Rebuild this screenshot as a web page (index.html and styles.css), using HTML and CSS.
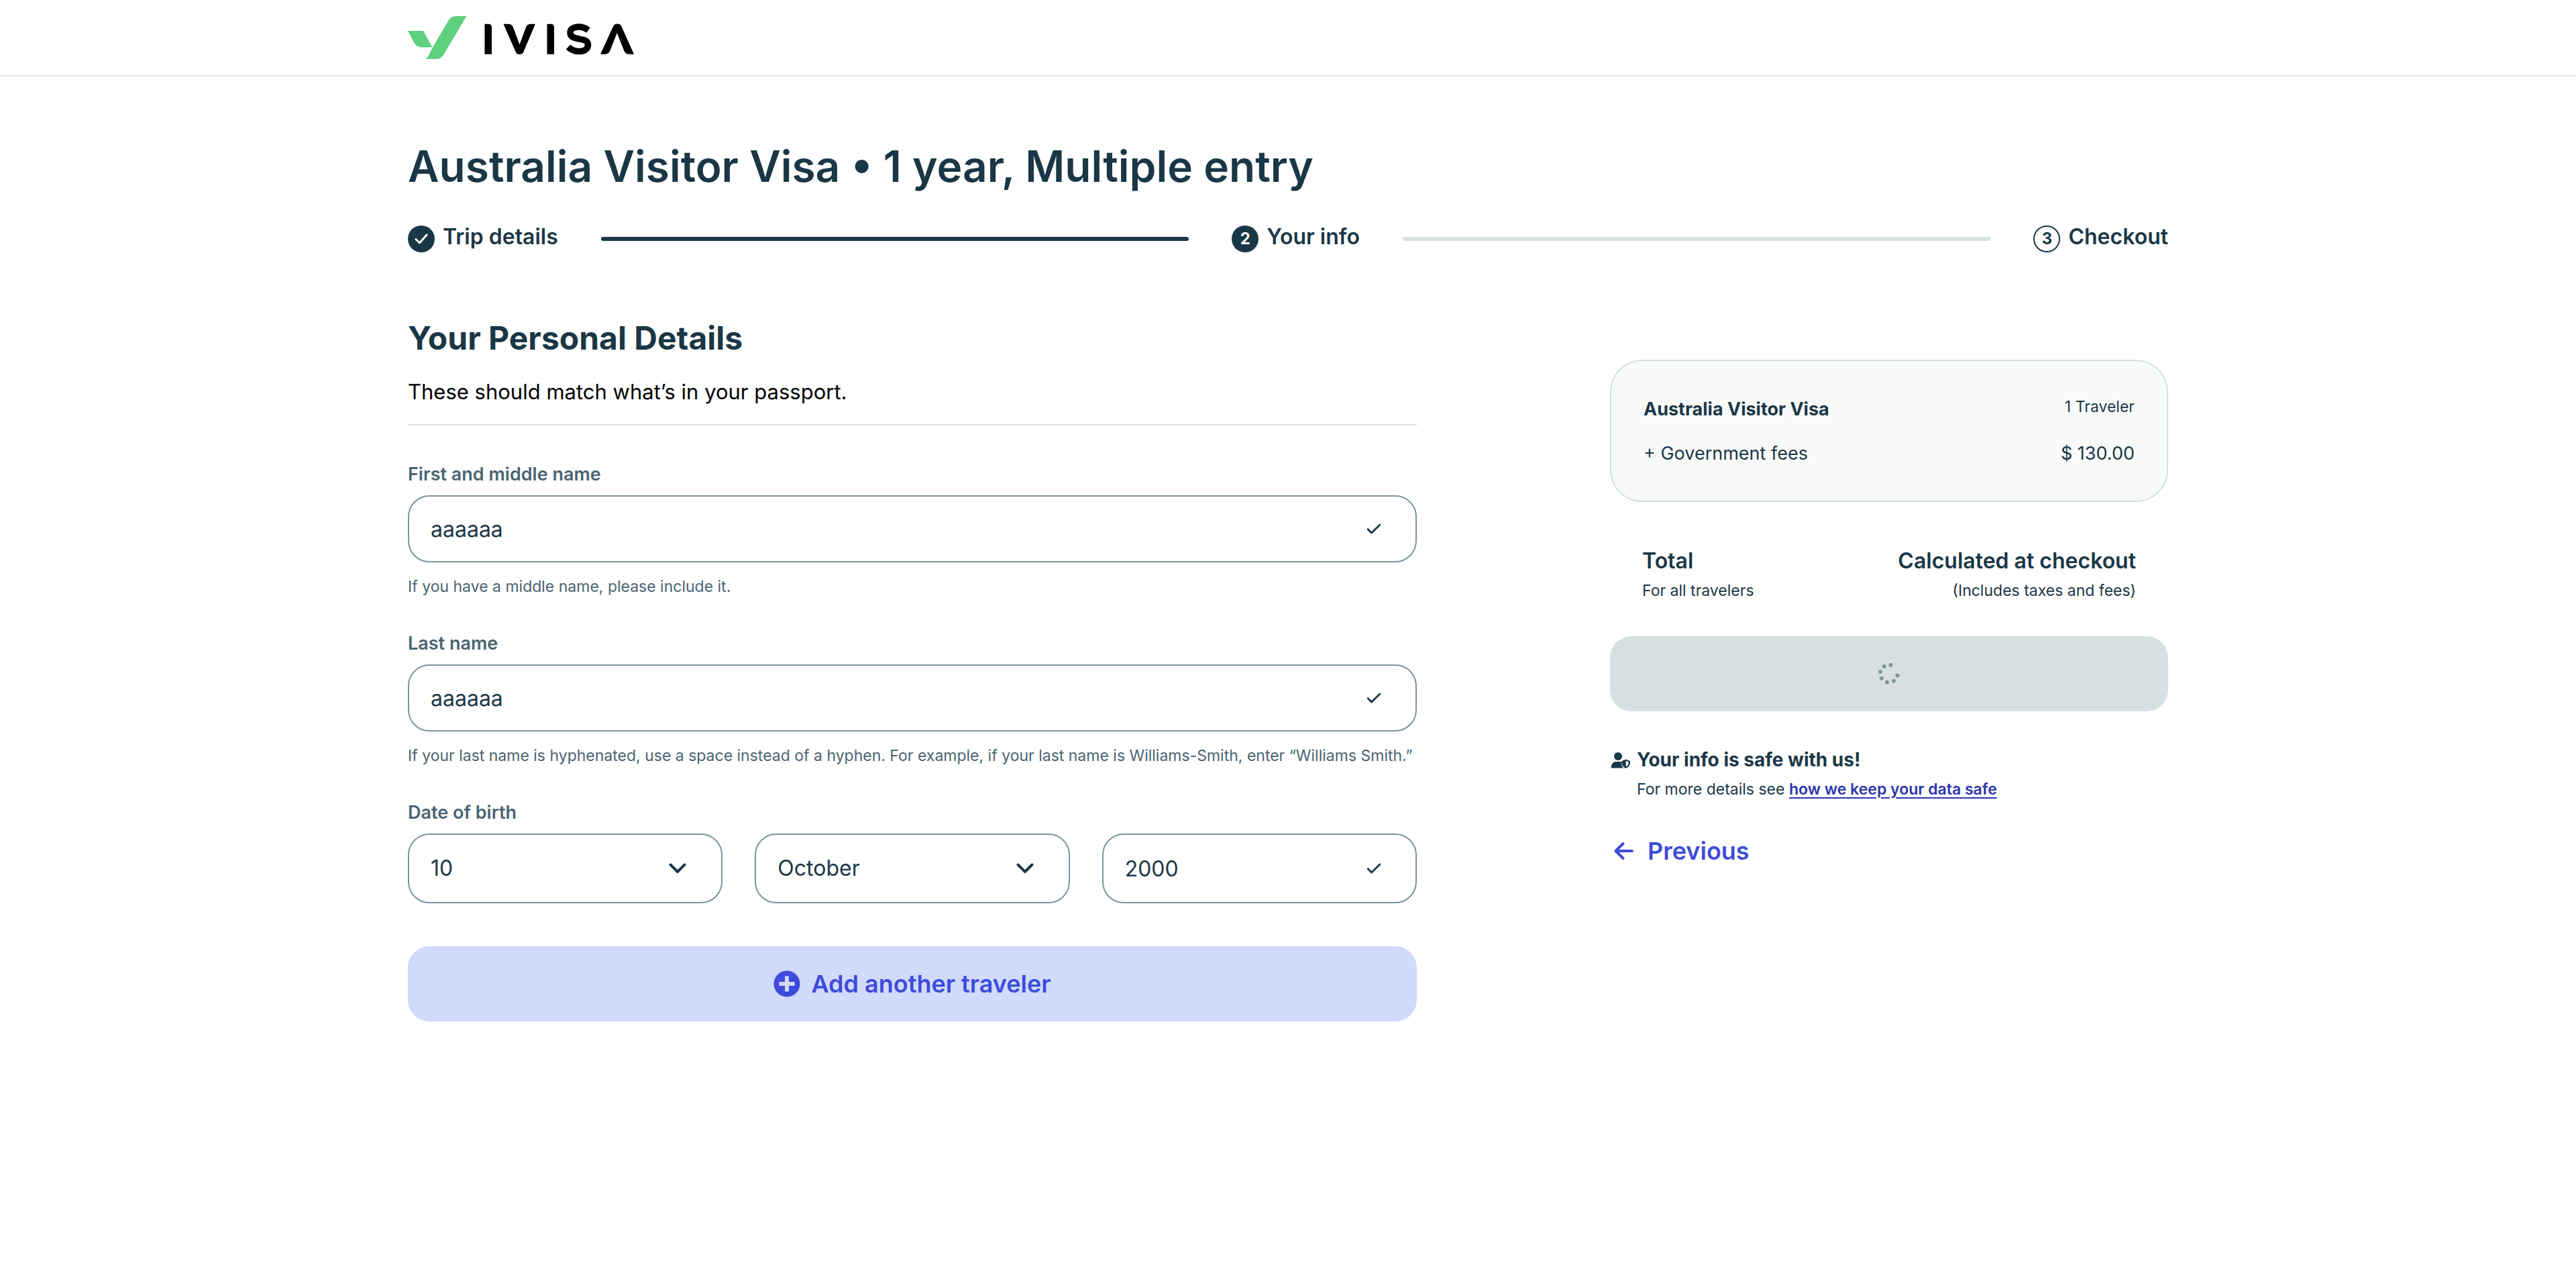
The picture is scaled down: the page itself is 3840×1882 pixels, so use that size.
FILE: index.html
```html
<!DOCTYPE html>
<html lang="en">
<head>
<meta charset="utf-8">
<title>Australia Visitor Visa – iVisa</title>
<meta name="viewport" content="width=device-width, initial-scale=1">
<link rel="stylesheet" href="styles.css">
</head>
<body>
<header class="site-header">
  <div class="container">
    <a class="logo" href="#" aria-label="iVisa">
      <svg width="338" height="66" viewBox="0 0 338 66" aria-hidden="true">
        <path fill="#5fd17e" d="M0 23h23l13.500 24.500H21C15 47.500 12 45 9.500 41Z"/>
        <path fill="#5fd17e" d="M87.500 1H72C66 1 62.500 4 60 8.500L37 47.500 34 53.500C32 58 30 62.500 26.500 65H42C48 65 51.500 62 54 57.500Z"/>
        <path d="M114.500 12.700h6.500q4 .6 4 5v40h-10.500ZM207.500 12.700h6.500q4 .6 4 5v40h-10.500Z"/>
        <path d="M142.500 12.700h7.500c4 .2 5.500 2 7 5l9.500 25.500 9.500-25.500c1.500-3.200 3-4.800 7-5h7L172.500 54c-1 2.800-3 4-6 4s-5-1.200-6-4Z"/>
        <path fill="none" stroke="#000" stroke-width="9.500" d="M269 22C259 14.500 242 15.500 242 25.500 242 39.500 268.500 31 268.500 43.500 268.500 56 249 56.500 239 47"/>
        <path d="M287 57.700h7c4-.2 5.800-2 7.300-5l10.500-26.700 10.500 26.700c1.500 3 3.200 4.800 7.200 5h7.500L318.500 16.500c-1-2.800-3.200-4-6.200-4s-5.200 1.200-6.300 4Z"/>
      </svg>
    </a>
  </div>
</header>

<main class="container main">
  <h1 class="page-title">Australia Visitor Visa • 1 year, Multiple entry</h1>

  <ol class="steps">
    <li class="step">
      <span class="badge"><svg width="20" height="16" viewBox="0 0 20 16" aria-hidden="true"><path d="M2 8.500l5.500 5.500L18 2"/></svg></span>
      <span class="step-name">Trip details</span>
    </li>
    <li class="bar bar-done" aria-hidden="true"></li>
    <li class="step" aria-current="step"><span class="badge">2</span><span class="step-name">Your info</span></li>
    <li class="bar" aria-hidden="true"></li>
    <li class="step"><span class="badge badge-next">3</span><span class="step-name">Checkout</span></li>
  </ol>

  <div class="columns">
    <form class="details">
      <div class="intro">
        <h2 class="section-title">Your Personal Details</h2>
        <p class="lead">These should match what’s in your passport.</p>
      </div>

      <div class="field">
        <label class="label" for="first">First and middle name</label>
        <div class="control">
          <input class="input" id="first" type="text" value="aaaaaa">
          <svg class="tick" width="20" height="16" viewBox="0 0 20 16" aria-hidden="true"><path d="M1 8.500l5.500 5.500L19 2"/></svg>
        </div>
        <p class="hint">If you have a middle name, please include it.</p>
      </div>

      <div class="field">
        <label class="label" for="last">Last name</label>
        <div class="control">
          <input class="input" id="last" type="text" value="aaaaaa">
          <svg class="tick" width="20" height="16" viewBox="0 0 20 16" aria-hidden="true"><path d="M1 8.500l5.500 5.500L19 2"/></svg>
        </div>
        <p class="hint">If your last name is hyphenated, use a space instead of a hyphen. For example, if your last name is Williams-Smith, enter “Williams Smith.”</p>
      </div>

      <div class="field">
        <label class="label" for="day">Date of birth</label>
        <div class="dob">
          <div class="control">
            <select class="input input-tall" id="day"><option>10</option></select>
            <svg class="chevron" width="26" height="16" viewBox="0 0 26 16" aria-hidden="true"><path d="M2.500 2.500L13 13 23.500 2.500"/></svg>
          </div>
          <div class="control">
            <select class="input input-tall" aria-label="Month of birth"><option>October</option></select>
            <svg class="chevron" width="26" height="16" viewBox="0 0 26 16" aria-hidden="true"><path d="M2.500 2.500L13 13 23.500 2.500"/></svg>
          </div>
          <div class="control">
            <input class="input input-tall" type="text" aria-label="Year of birth" value="2000">
            <svg class="tick" width="20" height="16" viewBox="0 0 20 16" aria-hidden="true"><path d="M1 8.500l5.500 5.500L19 2"/></svg>
          </div>
        </div>
      </div>

      <button class="button add" type="button">
        <svg width="40" height="40" viewBox="0 0 40 40" aria-hidden="true"><circle cx="20" cy="20" r="19.500" fill="#3e4bdb"/><path d="M20 8.500v23M8.500 20h23" stroke="#d0dafb" stroke-width="6"/></svg>
        Add another traveler
      </button>
    </form>

    <aside class="summary">
      <section class="card">
        <div class="row"><h3 class="card-title">Australia Visitor Visa</h3><span class="small">1 Traveler</span></div>
        <div class="row fees"><span>+ Government fees</span><span>$ 130.00</span></div>
      </section>
      <section class="total">
        <div class="row total-row"><span>Total</span><span>Calculated at checkout</span></div>
        <div class="row small"><span>For all travelers</span><span>(Includes taxes and fees)</span></div>
      </section>
      <button class="button wait" type="button" disabled aria-label="Loading">
        <svg width="34" height="34" viewBox="0 0 34 34" fill="#7f959e" aria-hidden="true">
          <circle cx="19.500" cy="4" r="3"/><circle cx="9.800" cy="6" r="3"/><circle cx="4" cy="14" r="3"/><circle cx="5.800" cy="23.700" r="3"/><circle cx="14" cy="29.700" r="3"/><circle cx="24" cy="27.700" r="3"/><circle cx="29.500" cy="19.500" r="3"/>
        </svg>
      </button>
      <section class="safe">
        <svg width="32" height="24" viewBox="0 0 32 24" aria-hidden="true">
          <g fill="#1a3746">
            <circle cx="12" cy="6" r="6"/>
            <path d="M2 23.500v-2c0-4.500 3-7.500 7-7.500h8c-.2 4.500.8 7.300 3 9.500Z"/>
            <path fill-rule="evenodd" d="M23.700 10.500l6.300 2.400c.3 4.800-1.300 8.800-6.300 11-5-2.200-6.600-6.200-6.300-11ZM23.700 12.800v8.600c3-1.500 4-3.800 4-7Z"/>
          </g>
        </svg>
        <div>
          <h3 class="safe-title">Your info is safe with us!</h3>
          <p class="small">For more details see <a class="link" href="#">how we keep your data safe</a></p>
        </div>
      </section>
      <a class="previous" href="#">
        <svg width="30" height="28" viewBox="0 0 30 28" aria-hidden="true"><path d="M27 14H3M13.500 3L2.500 14l11 11"/></svg>
        Previous
      </a>
    </aside>
  </div>
</main>
</body>
</html>
```
FILE: styles.css
```css
* { box-sizing: border-box; }
body, h1, h2, h3, p, ol { margin: 0; padding: 0; }
body { background: #fff; color: #1a3746; font-family: Inter, "Liberation Sans", sans-serif; font-size: 27px; line-height: 40px; }
svg { display: block; flex: none; }
.container { max-width: 2688px; margin: 0 auto; padding: 0 32px; }
.site-header { border-bottom: 2px solid #d7e0e1; padding: 23px 0; }
.logo { display: inline-block; vertical-align: top; }
.main { padding-top: 96px; padding-bottom: 96px; }
.page-title { font-size: 64px; line-height: 76px; font-weight: 600; }

.steps { display: flex; align-items: center; gap: 64px; list-style: none; margin-top: 50px; }
.step { display: flex; align-items: center; gap: 12px; }
.step-name { font-size: 32px; line-height: 32px; font-weight: 600; padding-bottom: 6px; }
.badge { width: 40px; height: 40px; border-radius: 50%; background: #1a3746; color: #fff; display: grid; place-items: center; font-size: 24px; line-height: 24px; font-weight: 700; }
.badge path { fill: none; stroke: #fff; stroke-width: 3; stroke-linecap: round; stroke-linejoin: round; }
.badge-next { background: #fff; border: 2px solid #1a3746; color: #1a3746; }
.bar { flex: 1; height: 6px; border-radius: 3px; background: #d7e0e1; }
.bar-done { background: #1a3746; }

.columns { display: grid; grid-template-columns: 1504fr 832fr; gap: 288px; margin-top: 96px; align-items: start; }
.intro { border-bottom: 2px solid #d7e0e1; padding-bottom: 24px; }
.section-title { font-size: 48px; line-height: 64px; font-weight: 700; }
.lead { margin-top: 24px; font-size: 31px; line-height: 48px; color: #000; }
.field { margin-top: 50px; }
.intro + .field { margin-top: 54px; }
.label { display: block; font-size: 27px; line-height: 38px; font-weight: 600; color: #4a6472; }
.control { display: grid; align-items: center; margin-top: 12px; }
.control > * { grid-area: 1 / 1; }
.input { width: 100%; height: 100px; border: 2px solid #7c949b; border-radius: 32px; padding: 0 32px; background: #fff; color: #1a3746; font: inherit; font-size: 32px; appearance: none; }
.input-tall { height: 104px; }
.tick, .chevron { justify-self: end; margin-right: 54px; fill: none; stroke: #1a3746; stroke-width: 3; stroke-linecap: round; stroke-linejoin: round; pointer-events: none; }
.chevron { stroke-width: 4; }
.hint { margin-top: 20px; font-size: 23px; line-height: 32px; color: #4a6472; }
.dob { display: grid; grid-template-columns: repeat(3, 1fr); gap: 48px; }

.button { display: flex; align-items: center; justify-content: center; gap: 16px; width: 100%; height: 112px; border: 0; border-radius: 32px; font: inherit; font-size: 36px; font-weight: 600; }
.add { margin-top: 64px; background: #d0dafb; color: #3e4bdb; }
.wait { margin-top: 50px; background: #d7e0e1; }

.summary { padding-top: 64px; }
.card { border: 2px solid #d7e0e1; border-radius: 48px; background: #f8faf9; padding: 50px 48px; }
.row { display: flex; justify-content: space-between; }
.card-title { font-size: 27px; line-height: 44px; font-weight: 700; }
.fees { margin-top: 24px; line-height: 40px; }
.small { font-size: 23px; line-height: 36px; }
.total { margin-top: 64px; padding: 0 48px; }
.total-row { margin-bottom: 2px; font-size: 32px; line-height: 48px; font-weight: 600; }
.safe { display: flex; gap: 8px; margin-top: 52px; }
.safe > svg { margin-top: 9px; }
.safe-title { font-size: 28px; line-height: 40px; font-weight: 700; }
.safe .small { margin-top: 6px; }
.link { color: #2a36ae; font-weight: 600; text-decoration-thickness: 2px; text-underline-offset: 4px; }
.previous { display: inline-flex; align-items: center; gap: 20px; margin-top: 50px; padding-left: 6px; font-size: 36px; line-height: 48px; font-weight: 600; color: #3e4bdb; text-decoration: none; }
.previous path { fill: none; stroke: #3e4bdb; stroke-width: 4; stroke-linecap: round; stroke-linejoin: round; }
```
